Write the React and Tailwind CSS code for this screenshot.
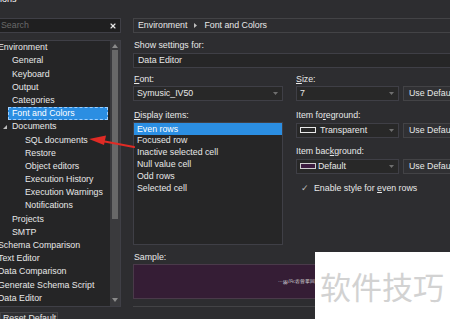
import { X } from "lucide-react";

const treeItems = [
  { label: "Environment", level: 0 },
  { label: "General", level: 1 },
  { label: "Keyboard", level: 1 },
  { label: "Output", level: 1 },
  { label: "Categories", level: 1 },
  { label: "Font and Colors", level: 1, selected: true },
  { label: "Documents", level: 1, expander: true },
  { label: "SQL documents", level: 2 },
  { label: "Restore", level: 2 },
  { label: "Object editors", level: 2 },
  { label: "Execution History", level: 2 },
  { label: "Execution Warnings", level: 2 },
  { label: "Notifications", level: 2 },
  { label: "Projects", level: 1 },
  { label: "SMTP", level: 1 },
  { label: "Schema Comparison", level: 0 },
  { label: "Text Editor", level: 0 },
  { label: "Data Comparison", level: 0 },
  { label: "Generate Schema Script", level: 0 },
  { label: "Data Editor", level: 0 },
];

const displayItems = [
  "Even rows",
  "Focused row",
  "Inactive selected cell",
  "Null value cell",
  "Odd rows",
  "Selected cell",
];

const indent = ["pl-[1px]", "pl-[15px]", "pl-[28px]"];

const Caret = () => (
  <svg width="5" height="3" viewBox="0 0 5 3" className="shrink-0">
    <path d="M0 0H5L2.5 3Z" fill="#6f6f6f" />
  </svg>
);

const TreeRow = ({ item }) => {
  if (item.selected) {
    return (
      <div className="h-[13.2px] flex items-center">
        <div className="ml-[11px] w-[100px] h-[13px] flex items-center pl-[4px] bg-[#2b8ee2] outline outline-1 outline-dashed outline-[#9fd0ff] -outline-offset-1 text-white">
          {item.label}
        </div>
      </div>
    );
  }
  if (item.expander) {
    return (
      <div className="h-[13.2px] flex items-center pl-[6px]">
        <svg width="4" height="4" viewBox="0 0 4 4" className="mr-[5px]">
          <path d="M4 0V4H0Z" fill="#bdbdbd" />
        </svg>
        {item.label}
      </div>
    );
  }
  return (
    <div className={`h-[13.2px] flex items-center whitespace-nowrap ${indent[item.level]}`}>
      {item.label}
    </div>
  );
};

const Combo = ({ children, className = "" }) => (
  <div
    className={`h-[15px] flex items-center justify-between border border-[#3f3f46] bg-[#282828] pl-[3px] pr-[4px] ${className}`}
  >
    <div className="flex items-center">{children}</div>
    <Caret />
  </div>
);

const DefaultButton = () => (
  <div className="ml-[4px] w-[60px] h-[15px] flex items-center pl-[5px] border border-[#434346] bg-[#303033] whitespace-nowrap">
    Use Default
  </div>
);

const App = () => {
  return (
    <div className="relative w-[450px] h-[319px] overflow-hidden bg-[#2d2d30] text-[#e8e8e8] text-[8.8px] leading-none font-['Liberation_Sans',sans-serif]">
      <div className="h-[18px] flex items-start">
        <span className="-mt-[5px] text-[9px] text-white">ions</span>
      </div>

      <div className="flex gap-[12px]">
        {/* left: options tree */}
        <div className="-ml-[4px] w-[125px] shrink-0 flex flex-col">
          <div className="h-[15px] flex items-center justify-between border border-[#3f3f46] bg-[#1f1f20] pl-[4px] pr-[3px]">
            <span className="text-[#6a6a6a]">Search</span>
            <X size={8} strokeWidth={3.5} color="#e6e6e6" />
          </div>

          <div className="mt-[7px] h-[267px] flex border border-[#3f3f46] bg-[#252526]">
            <div className="flex-1 flex flex-col">
              {treeItems.map((item) => (
                <TreeRow key={item.label} item={item} />
              ))}
            </div>
            <div className="w-[10px] flex flex-col items-center bg-[#3a3a3d]">
              <svg width="6" height="4" viewBox="0 0 6 4" className="mt-[3px]">
                <path d="M0 4H6L3 0Z" fill="#8a8a8a" />
              </svg>
              <div className="mt-[2px] w-[6px] h-[169px] bg-[#686868]" />
              <div className="flex-1" />
              <svg width="6" height="4" viewBox="0 0 6 4" className="mb-[4px]">
                <path d="M0 0H6L3 4Z" fill="#8a8a8a" />
              </svg>
            </div>
          </div>

          <div className="mt-[5px] ml-[4px] w-[58px] h-[12px] flex items-center pl-[2px] border border-[#434346] bg-[#303033] whitespace-nowrap">
            Reset Default
          </div>
        </div>

        {/* right: settings */}
        <div className="w-[330px] shrink-0 flex flex-col">
          <div className="h-[15px] flex items-center pl-[4px] border border-[#434346]">
            <span>Environment</span>
            <svg width="3" height="5" viewBox="0 0 3 5" className="mx-[7px]">
              <path d="M0 0L3 2.5L0 5Z" fill="#bdbdbd" />
            </svg>
            <span>Font and Colors</span>
          </div>

          <div className="mt-[6px] h-[12px] flex items-center pl-[1px]">Show settings for:</div>
          <div className="mt-[2px] h-[15px] flex items-center pl-[4px] border border-[#3f3f46] bg-[#262627]">
            Data Editor
          </div>

          <div className="mt-[5px] flex">
            <div className="w-[155px] flex flex-col">
              <div className="h-[12px] flex items-center pl-[1px]">
                <span className="underline underline-offset-1">F</span>ont:
              </div>
              <Combo className="mt-[1px]">Symusic_IV50</Combo>

              <div className="mt-[8px] h-[12px] flex items-center pl-[1px]">
                <span className="underline underline-offset-1">D</span>isplay items:
              </div>
              <div className="mt-[1px] h-[123px] flex flex-col border border-[#3f3f46] bg-[#262627]">
                {displayItems.map((label, i) => (
                  <div
                    key={label}
                    className={`h-[11.9px] flex items-center pl-[3px] ${
                      i === 0 ? "bg-[#2b8ee2] text-white" : ""
                    }`}
                  >
                    {label}
                  </div>
                ))}
              </div>
            </div>

            <div className="ml-[13px] flex flex-col">
              <div className="h-[12px] flex items-center">
                <span className="underline underline-offset-1">S</span>ize:
              </div>
              <div className="mt-[1px] flex">
                <Combo className="w-[103px]">7</Combo>
                <DefaultButton />
              </div>

              <div className="mt-[8px] h-[12px] flex items-center">
                Item fo<span className="underline underline-offset-1">r</span>eground:
              </div>
              <div className="mt-[2px] flex">
                <Combo className="w-[103px]">
                  <div className="w-[16px] h-[6px] border border-[#e8e8e8] mr-[4px]" />
                  Transparent
                </Combo>
                <DefaultButton />
              </div>

              <div className="mt-[7px] h-[12px] flex items-center">
                Item bac<span className="underline underline-offset-1">k</span>ground:
              </div>
              <div className="mt-[2px] flex">
                <Combo className="w-[103px]">
                  <div className="w-[16px] h-[6px] border border-[#cfcfcf] bg-[#3d1d40] mr-[2px]" />
                  Default
                </Combo>
                <DefaultButton />
              </div>

              <div className="mt-[8px] h-[12px] flex items-center pl-[5px]">
                <span className="text-[#bdbdbd] mr-[5px]">✓</span>
                Enable style for&nbsp;<span className="underline underline-offset-1">e</span>ven rows
              </div>
            </div>
          </div>

          <div className="mt-[6px] h-[12px] flex items-center pl-[1px]">Sample:</div>
          <div className="mt-[1px] h-[35px] flex items-center pl-[144px] border border-[#4a3a4a] bg-[#351d35]">
            <span className="text-[5px] text-[#d8d8d8] whitespace-nowrap tracking-tight">
              ···ყყ//²ረ齿曾掌回
            </span>
          </div>
          <div className="mt-[7px] border-t border-[#434346]" />
        </div>
      </div>

      {/* annotation arrow */}
      <svg
        className="absolute left-0 top-0 pointer-events-none"
        width="450"
        height="319"
        viewBox="0 0 450 319"
      >
        <path d="M134 147L102 141" stroke="#e02b25" strokeWidth="2.2" strokeLinecap="round" />
        <path d="M89 139L106 135.5L104 145Z" fill="#e02b25" />
      </svg>

      {/* watermark */}
      <div className="absolute left-[315px] top-[252px] w-[135px] h-[67px] bg-white flex items-center pl-[5px]">
        <span className="text-[31px] leading-none text-[#d2d2d2] font-['Noto_Sans_CJK_SC',sans-serif] whitespace-nowrap">
          软件技巧
        </span>
      </div>
    </div>
  );
};

export default App;
